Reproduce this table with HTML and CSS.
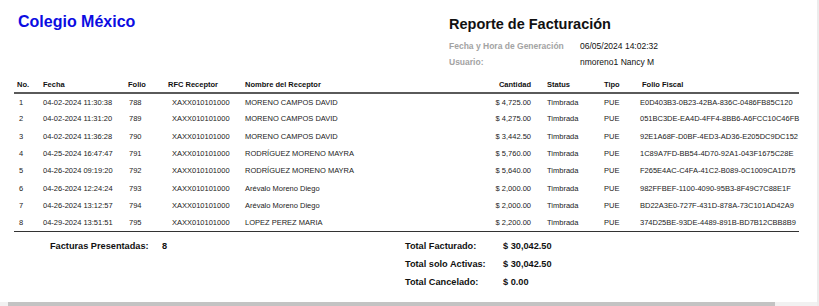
FILE: index.html
```html
<!DOCTYPE html>
<html lang="es">
<head>
<meta charset="utf-8">
<title>Reporte de Facturación</title>
<link rel="stylesheet" href="styles.css">
</head>
<body>
<div class="viewport">
  <div class="page">
    <header class="top">
      <h1 class="school">Colegio México</h1>
      <div class="report">
        <h2 class="report-title">Reporte de Facturación</h2>
        <div class="meta"><span class="meta-label">Fecha y Hora de Generación</span><span class="meta-value">06/05/2024 14:02:32</span></div>
        <div class="meta"><span class="meta-label">Usuario:</span><span class="meta-value">nmoreno1 Nancy M</span></div>
      </div>
    </header>

    <table class="invoices">
      <colgroup>
        <col class="c-no"><col class="c-fecha"><col class="c-folio"><col class="c-rfc"><col class="c-nombre"><col class="c-cant"><col class="c-status"><col class="c-tipo"><col class="c-ff">
      </colgroup>
      <thead>
        <tr>
          <th class="no">No.</th><th>Fecha</th><th class="folio">Folio</th><th class="rfc">RFC Receptor</th><th>Nombre del Receptor</th><th class="cant">Cantidad</th><th>Status</th><th>Tipo</th><th class="ff">Folio Fiscal</th>
        </tr>
      </thead>
      <tbody>
        <tr><td class="no">1</td><td>04-02-2024 11:30:38</td><td>788</td><td>XAXX010101000</td><td>MORENO CAMPOS DAVID</td><td class="cant">$ 4,725.00</td><td>Timbrada</td><td>PUE</td><td>E0D403B3-0B23-42BA-836C-0486FB85C120</td></tr>
        <tr><td class="no">2</td><td>04-02-2024 11:31:20</td><td>789</td><td>XAXX010101000</td><td>MORENO CAMPOS DAVID</td><td class="cant">$ 4,275.00</td><td>Timbrada</td><td>PUE</td><td>051BC3DE-EA4D-4FF4-8BB6-A6FCC10C46FB</td></tr>
        <tr><td class="no">3</td><td>04-02-2024 11:36:28</td><td>790</td><td>XAXX010101000</td><td>MORENO CAMPOS DAVID</td><td class="cant">$ 3,442.50</td><td>Timbrada</td><td>PUE</td><td>92E1A68F-D0BF-4ED3-AD36-E205DC9DC152</td></tr>
        <tr><td class="no">4</td><td>04-25-2024 16:47:47</td><td>791</td><td>XAXX010101000</td><td>RODRÍGUEZ MORENO MAYRA</td><td class="cant">$ 5,760.00</td><td>Timbrada</td><td>PUE</td><td>1C89A7FD-BB54-4D70-92A1-043F1675C28E</td></tr>
        <tr><td class="no">5</td><td>04-26-2024 09:19:20</td><td>792</td><td>XAXX010101000</td><td>RODRÍGUEZ MORENO MAYRA</td><td class="cant">$ 5,640.00</td><td>Timbrada</td><td>PUE</td><td>F265E4AC-C4FA-41C2-B089-0C1009CA1D75</td></tr>
        <tr><td class="no">6</td><td>04-26-2024 12:24:24</td><td>793</td><td>XAXX010101000</td><td>Arévalo Moreno Diego</td><td class="cant">$ 2,000.00</td><td>Timbrada</td><td>PUE</td><td>982FFBEF-1100-4090-95B3-8F49C7C88E1F</td></tr>
        <tr><td class="no">7</td><td>04-26-2024 13:12:57</td><td>794</td><td>XAXX010101000</td><td>Arévalo Moreno Diego</td><td class="cant">$ 2,000.00</td><td>Timbrada</td><td>PUE</td><td>BD22A3E0-727F-431D-878A-73C101AD42A9</td></tr>
        <tr><td class="no">8</td><td>04-29-2024 13:51:51</td><td>795</td><td>XAXX010101000</td><td>LOPEZ PEREZ MARIA</td><td class="cant">$ 2,200.00</td><td>Timbrada</td><td>PUE</td><td>374D25BE-93DE-4489-891B-BD7B12CBB8B9</td></tr>
      </tbody>
    </table>

    <section class="summary">
      <div class="count">
        <span class="s-label">Facturas Presentadas:</span><span class="s-value">8</span>
      </div>
      <div class="totals">
        <span class="s-label">Total Facturado:</span><span class="s-value">$ 30,042.50</span>
        <span class="s-label">Total solo Activas:</span><span class="s-value">$ 30,042.50</span>
        <span class="s-label">Total Cancelado:</span><span class="s-value">$ 0.00</span>
      </div>
    </section>
  </div>
  <div class="hscroll"><div class="hscroll-thumb"></div></div>
</div>
</body>
</html>
```

FILE: styles.css
```css
* { box-sizing: border-box; }

html, body {
  margin: 0;
  padding: 0;
  background: #ffffff;
}

body {
  font-family: "Liberation Sans", Arial, sans-serif;
  color: #1e1e1e;
}

.viewport {
  width: 819px;
  height: 306px;
  overflow: hidden;
  display: flex;
  flex-direction: column;
  border-right: 2px solid #ececec;
}

.page {
  flex: 1;
  padding: 12px 0 0 14px;
}

/* ---------- header ---------- */
.top {
  display: flex;
  height: 59px;
}

.school {
  flex: 0 0 435px;
  margin: 0;
  padding-left: 4px;
  font-size: 16px;
  line-height: 20px;
  font-weight: bold;
  color: #0c0ce2;
}

.report {
  display: flex;
  flex-direction: column;
}

.report-title {
  margin: 2px 0 0;
  font-size: 14.5px;
  line-height: 20px;
  font-weight: bold;
  color: #111111;
}

.meta {
  display: flex;
  margin-top: 0;
  font-size: 8.5px;
  line-height: 16.6px;
}
.meta:first-of-type { margin-top: 3.6px; }

.meta-label {
  flex: 0 0 131px;
  font-weight: bold;
  color: #a3a3a3;
}

.meta-value {
  color: #111111;
}

/* ---------- table ---------- */
.invoices {
  margin-top: 5px;
  width: 785px;
  border-collapse: collapse;
  table-layout: fixed;
  font-size: 7.5px;
}

.c-no { width: 29px; }
.c-fecha { width: 86px; }
.c-folio { width: 43px; }
.c-rfc { width: 73px; }
.c-nombre { width: 235px; }
.c-cant { width: 67px; }
.c-status { width: 57px; }
.c-tipo { width: 36px; }
.c-ff { width: 159px; }

.invoices th,
.invoices td {
  padding: 0;
  text-align: left;
  white-space: nowrap;
  overflow: visible;
}

.invoices th {
  height: 17px;
  font-weight: bold;
  color: #111111;
  border-bottom: 2px solid #5a5a5a;
  vertical-align: middle;
}

.invoices td {
  height: 17.3px;
  color: #222222;
  vertical-align: middle;
}

.invoices th.no { padding-left: 3px; }
.invoices td.no { padding-left: 5px; }
.invoices th.folio { text-indent: -1px; }
.invoices th.rfc { text-indent: -4px; }
.invoices th.ff { text-indent: 2px; }

.invoices .cant {
  text-align: right;
  padding-right: 16px;
}

.invoices tbody tr:last-child td {
  border-bottom: 1px solid #333333;
}

/* ---------- summary ---------- */
.summary {
  display: flex;
  padding-top: 5px;
  font-size: 9.2px;
  font-weight: bold;
  color: #111111;
}

.count {
  flex: 0 0 391px;
  padding-left: 36px;
  display: grid;
  grid-template-columns: 112px auto;
  align-content: start;
  line-height: 18px;
}

.totals {
  display: grid;
  grid-template-columns: 98px auto;
  line-height: 18px;
}

/* ---------- scrollbar ---------- */
.hscroll {
  height: 4px;
  background: #f1f1f1;
  padding-left: 8px;
  padding-right: 42px;
}

.hscroll-thumb {
  height: 100%;
  background: #c3c3c3;
}
```
